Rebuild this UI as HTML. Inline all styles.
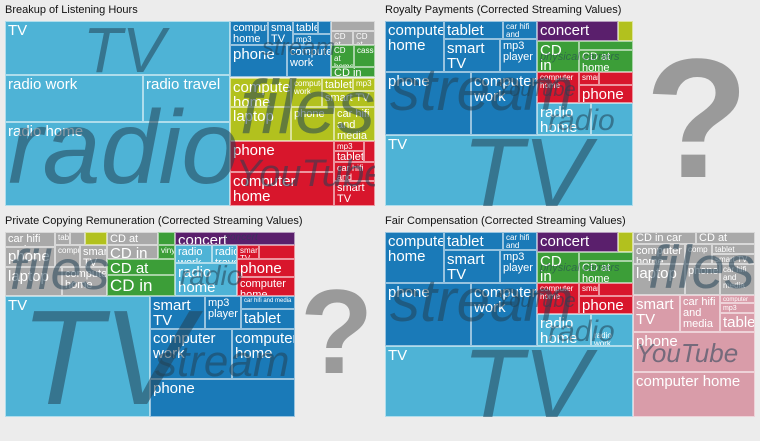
<!DOCTYPE html>
<html><head><meta charset="utf-8"><style>
body{margin:0;width:760px;height:422px;background:#ececec;position:relative;overflow:hidden;font-family:"Liberation Sans",sans-serif}
.t{position:absolute;font-size:11px;color:#111;white-space:nowrap}
.b{position:absolute;box-sizing:border-box;border:1px solid rgba(255,255,255,.55);color:#fff;overflow:hidden;line-height:1;padding:1px 2px;font-size:13px}
.L{background:#4eb3d6}.D{background:#1a7ab8}.Y{background:#b2c11e}.R{background:#d8162c}.G{background:#3c9e38}.P{background:#5a1f6c}.A{background:#a9a9a9}.K{background:#d99ca9}
.o{position:absolute;font-style:italic;color:rgba(35,65,85,.55);white-space:nowrap;line-height:1;pointer-events:none}
.c{position:absolute;left:0;top:0;width:760px;height:422px}
.q{position:absolute;font-weight:bold;color:#9a9a9a;line-height:1}
.s{font-size:8px}.m{font-size:11px}.l{font-size:15px}
</style></head><body>
<div class="t" style="left:5px;top:4px">Breakup of Listening Hours</div>
<div class="t" style="left:385px;top:4px">Royalty Payments (Corrected Streaming Values)</div>
<div class="t" style="left:5px;top:215px">Private Copying Remuneration (Corrected Streaming Values)</div>
<div class="t" style="left:385px;top:215px">Fair Compensation (Corrected Streaming Values)</div>

<!-- Q1 -->
<div class="b L l" style="left:5px;top:21px;width:225px;height:54px">TV</div>
<div class="b L l" style="left:5px;top:75px;width:138px;height:47px">radio work</div>
<div class="b L l" style="left:143px;top:75px;width:87px;height:47px">radio travel</div>
<div class="b L l" style="left:5px;top:122px;width:225px;height:84px">radio home</div>
<div class="b D m" style="left:230px;top:21px;width:38px;height:24px">computer home</div>
<div class="b D m" style="left:268px;top:21px;width:25px;height:24px">smart TV</div>
<div class="b D m" style="left:293px;top:21px;width:25px;height:13px">tablet</div>
<div class="b D" style="left:318px;top:21px;width:13px;height:13px"></div>
<div class="b D s" style="left:293px;top:34px;width:38px;height:11px">mp3 player</div>
<div class="b D l" style="left:230px;top:45px;width:57px;height:32px">phone</div>
<div class="b D m" style="left:287px;top:45px;width:44px;height:32px">computer work</div>
<div class="b A" style="left:331px;top:21px;width:44px;height:10px"></div>
<div class="b A s" style="left:331px;top:31px;width:22px;height:14px">CD at</div>
<div class="b A s" style="left:353px;top:31px;width:22px;height:14px">CD at</div>
<div class="b G s" style="left:331px;top:45px;width:23px;height:22px">CD at home</div>
<div class="b G s" style="left:354px;top:45px;width:21px;height:22px">cassette</div>
<div class="b G m" style="left:331px;top:67px;width:44px;height:10px;padding-top:0">CD in car</div>
<div class="b Y l" style="left:230px;top:78px;width:61px;height:29px">computer home</div>
<div class="b Y l" style="left:230px;top:107px;width:61px;height:34px">laptop</div>
<div class="b Y s" style="left:291px;top:78px;width:31px;height:29px">computer work</div>
<div class="b Y m" style="left:322px;top:78px;width:31px;height:13px">tablet</div>
<div class="b Y s" style="left:353px;top:78px;width:22px;height:13px">mp3</div>
<div class="b Y m" style="left:322px;top:91px;width:53px;height:16px">smart TV</div>
<div class="b Y m" style="left:291px;top:107px;width:43px;height:34px">phone</div>
<div class="b Y m" style="left:334px;top:107px;width:41px;height:34px">car hifi and media</div>
<div class="b R l" style="left:230px;top:141px;width:104px;height:31px">phone</div>
<div class="b R l" style="left:230px;top:172px;width:104px;height:34px">computer home</div>
<div class="b R s" style="left:334px;top:141px;width:30px;height:10px">mp3 player</div>
<div class="b R" style="left:364px;top:141px;width:11px;height:21px"></div>
<div class="b R m" style="left:334px;top:151px;width:30px;height:11px;padding-top:0">tablet</div>
<div class="b R s" style="left:334px;top:162px;width:41px;height:19px;font-size:9px">car hifi and media</div>
<div class="b R m" style="left:334px;top:181px;width:41px;height:25px">smart TV</div>
<div class="c" style="clip-path:inset(21px 385px 216px 5px)">
<div class="o" style="left:83px;top:18px;font-size:64px">TV</div>
<div class="o" style="left:8px;top:96px;font-size:104px">radio</div>
<div class="o" style="left:240px;top:70px;font-size:76px">files</div>
<div class="o" style="left:262px;top:36px;font-size:24px">stream</div>
<div class="o" style="left:236px;top:155px;font-size:38px">YouTube</div>
</div>

<!-- Q2 -->
<div class="b D l" style="left:385px;top:21px;width:59px;height:51px">computer home</div>
<div class="b D l" style="left:444px;top:21px;width:59px;height:18px">tablet</div>
<div class="b D s" style="left:503px;top:21px;width:34px;height:18px">car hifi and media</div>
<div class="b D l" style="left:444px;top:39px;width:56px;height:33px">smart TV</div>
<div class="b D m" style="left:500px;top:39px;width:37px;height:33px">mp3 player</div>
<div class="b D l" style="left:385px;top:72px;width:86px;height:63px">phone</div>
<div class="b D l" style="left:471px;top:72px;width:66px;height:63px">computer work</div>
<div class="b P l" style="left:537px;top:21px;width:81px;height:20px">concert</div>
<div class="b Y" style="left:618px;top:21px;width:15px;height:20px"></div>
<div class="b G l" style="left:537px;top:41px;width:42px;height:31px">CD in car</div>
<div class="b G" style="left:579px;top:41px;width:54px;height:9px"></div>
<div class="b G m" style="left:579px;top:50px;width:54px;height:22px">CD at home</div>
<div class="b R s" style="left:537px;top:72px;width:42px;height:31px">computer home</div>
<div class="b R s" style="left:579px;top:72px;width:20px;height:13px">smart</div>
<div class="b R" style="left:599px;top:72px;width:34px;height:13px"></div>
<div class="b R l" style="left:579px;top:85px;width:54px;height:18px">phone</div>
<div class="b L l" style="left:537px;top:103px;width:54px;height:32px">radio home</div>
<div class="b L" style="left:591px;top:103px;width:42px;height:32px"></div>
<div class="b L l" style="left:385px;top:135px;width:248px;height:71px">TV</div>
<div class="c" style="clip-path:inset(21px 127px 216px 385px)">
<div class="o" style="left:390px;top:60px;font-size:60px">stream</div>
<div class="o" style="left:462px;top:124px;font-size:100px">TV</div>
<div class="o" style="left:497px;top:80px;font-size:20px">YouTube</div>
<div class="o" style="left:548px;top:106px;font-size:30px">radio</div>
<div class="o" style="left:540px;top:52px;font-size:11px">physical carriers</div>
</div>
<div class="q" style="left:645px;top:34px;font-size:170px">?</div>

<!-- Q4 -->
<div class="b D l" style="left:385px;top:232px;width:59px;height:51px">computer home</div>
<div class="b D l" style="left:444px;top:232px;width:59px;height:18px">tablet</div>
<div class="b D s" style="left:503px;top:232px;width:34px;height:18px">car hifi and media</div>
<div class="b D l" style="left:444px;top:250px;width:56px;height:33px">smart TV</div>
<div class="b D m" style="left:500px;top:250px;width:37px;height:33px">mp3 player</div>
<div class="b D l" style="left:385px;top:283px;width:86px;height:63px">phone</div>
<div class="b D l" style="left:471px;top:283px;width:66px;height:63px">computer work</div>
<div class="b P l" style="left:537px;top:232px;width:81px;height:20px">concert</div>
<div class="b Y" style="left:618px;top:232px;width:15px;height:20px"></div>
<div class="b G l" style="left:537px;top:252px;width:42px;height:31px">CD in car</div>
<div class="b G" style="left:579px;top:252px;width:54px;height:9px"></div>
<div class="b G m" style="left:579px;top:261px;width:54px;height:22px">CD at home</div>
<div class="b R s" style="left:537px;top:283px;width:42px;height:31px">computer home</div>
<div class="b R s" style="left:579px;top:283px;width:20px;height:13px">smart</div>
<div class="b R" style="left:599px;top:283px;width:34px;height:13px"></div>
<div class="b R l" style="left:579px;top:296px;width:54px;height:18px">phone</div>
<div class="b L l" style="left:537px;top:314px;width:54px;height:32px">radio home</div>
<div class="b L s" style="left:591px;top:314px;width:42px;height:32px"><br><br>radio work</div>
<div class="b L l" style="left:385px;top:346px;width:248px;height:71px">TV</div>
<div class="b A m" style="left:633px;top:232px;width:63px;height:12px;padding-top:0">CD in car</div>
<div class="b A m" style="left:696px;top:232px;width:59px;height:12px;padding-top:0">CD at home</div>
<div class="b A m" style="left:633px;top:244px;width:52px;height:20px">computer home</div>
<div class="b A s" style="left:685px;top:244px;width:27px;height:20px">comp</div>
<div class="b A s" style="left:712px;top:244px;width:43px;height:10px">tablet</div>
<div class="b A s" style="left:712px;top:254px;width:43px;height:10px">smart TV</div>
<div class="b A l" style="left:633px;top:264px;width:52px;height:31px">laptop</div>
<div class="b A m" style="left:685px;top:264px;width:35px;height:31px">phone</div>
<div class="b A s" style="left:720px;top:264px;width:35px;height:31px">car hifi and media</div>
<div class="b K l" style="left:633px;top:295px;width:47px;height:37px">smart TV</div>
<div class="b K m" style="left:680px;top:295px;width:40px;height:37px">car hifi and media</div>
<div class="b K s" style="left:720px;top:295px;width:35px;height:8px;font-size:6px">computer work</div>
<div class="b K s" style="left:720px;top:303px;width:35px;height:10px;font-size:7px">mp3 player</div>
<div class="b K l" style="left:720px;top:313px;width:35px;height:19px">tablet</div>
<div class="b K l" style="left:633px;top:332px;width:122px;height:40px">phone</div>
<div class="b K l" style="left:633px;top:372px;width:122px;height:45px">computer home</div>
<div class="c" style="clip-path:inset(232px 5px 5px 385px)">
<div class="o" style="left:390px;top:271px;font-size:60px">stream</div>
<div class="o" style="left:462px;top:335px;font-size:100px">TV</div>
<div class="o" style="left:497px;top:291px;font-size:20px">YouTube</div>
<div class="o" style="left:548px;top:317px;font-size:30px">radio</div>
<div class="o" style="left:540px;top:263px;font-size:11px">physical carriers</div>
<div class="o" style="left:648px;top:238px;font-size:60px">files</div>
<div class="o" style="left:636px;top:340px;font-size:26px">YouTube</div>
</div>

<!-- Q3 -->
<div class="b A m" style="left:5px;top:232px;width:50px;height:15px">car hifi and media</div>
<div class="b A s" style="left:55px;top:232px;width:15px;height:13px">tablet</div>
<div class="b A s" style="left:70px;top:232px;width:15px;height:13px"></div>
<div class="b Y" style="left:85px;top:232px;width:22px;height:13px"></div>
<div class="b A l" style="left:5px;top:247px;width:50px;height:20px">phone</div>
<div class="b A s" style="left:55px;top:245px;width:25px;height:22px">computer</div>
<div class="b A m" style="left:80px;top:245px;width:27px;height:22px">smart TV</div>
<div class="b A l" style="left:5px;top:267px;width:57px;height:29px">laptop</div>
<div class="b A m" style="left:62px;top:267px;width:45px;height:29px">computer home</div>
<div class="b A m" style="left:107px;top:232px;width:51px;height:13px">CD at home</div>
<div class="b G" style="left:158px;top:232px;width:17px;height:13px"></div>
<div class="b A l" style="left:107px;top:245px;width:51px;height:14px;padding-top:0">CD in car</div>
<div class="b G s" style="left:158px;top:245px;width:17px;height:14px">vinyl</div>
<div class="b G l" style="left:107px;top:259px;width:68px;height:16px">CD at home</div>
<div class="b G l" style="left:107px;top:275px;width:68px;height:21px;font-size:17px">CD in car</div>
<div class="b P l" style="left:175px;top:232px;width:120px;height:13px;padding-top:0">concert</div>
<div class="b L m" style="left:175px;top:245px;width:37px;height:18px">radio work</div>
<div class="b L m" style="left:212px;top:245px;width:25px;height:18px">radio travel</div>
<div class="b L l" style="left:175px;top:263px;width:62px;height:33px">radio home</div>
<div class="b R s" style="left:237px;top:245px;width:22px;height:14px">smart TV</div>
<div class="b R" style="left:259px;top:245px;width:36px;height:14px"></div>
<div class="b R l" style="left:237px;top:259px;width:58px;height:18px">phone</div>
<div class="b R m" style="left:237px;top:277px;width:58px;height:19px">computer home</div>
<div class="b L l" style="left:5px;top:296px;width:145px;height:121px">TV</div>
<div class="b D l" style="left:150px;top:296px;width:55px;height:33px">smart TV</div>
<div class="b D m" style="left:205px;top:296px;width:36px;height:33px">mp3 player</div>
<div class="b D s" style="left:241px;top:296px;width:54px;height:13px;font-size:6px">car hifi and media</div>
<div class="b D l" style="left:241px;top:309px;width:54px;height:20px">tablet</div>
<div class="b D l" style="left:150px;top:329px;width:82px;height:50px">computer work</div>
<div class="b D l" style="left:232px;top:329px;width:63px;height:50px">computer home</div>
<div class="b D l" style="left:150px;top:379px;width:145px;height:38px">phone</div>
<div class="c" style="clip-path:inset(232px 465px 5px 5px)">
<div class="o" style="left:10px;top:242px;font-size:56px">files</div>
<div class="o" style="left:20px;top:290px;font-size:135px">TV</div>
<div class="o" style="left:155px;top:340px;font-size:44px">stream</div>
<div class="o" style="left:180px;top:262px;font-size:28px">radio</div>
<div class="o" style="left:225px;top:233px;font-size:10px">concert</div>
</div>
<div class="q" style="left:300px;top:272px;font-size:120px">?</div>
</body></html>
